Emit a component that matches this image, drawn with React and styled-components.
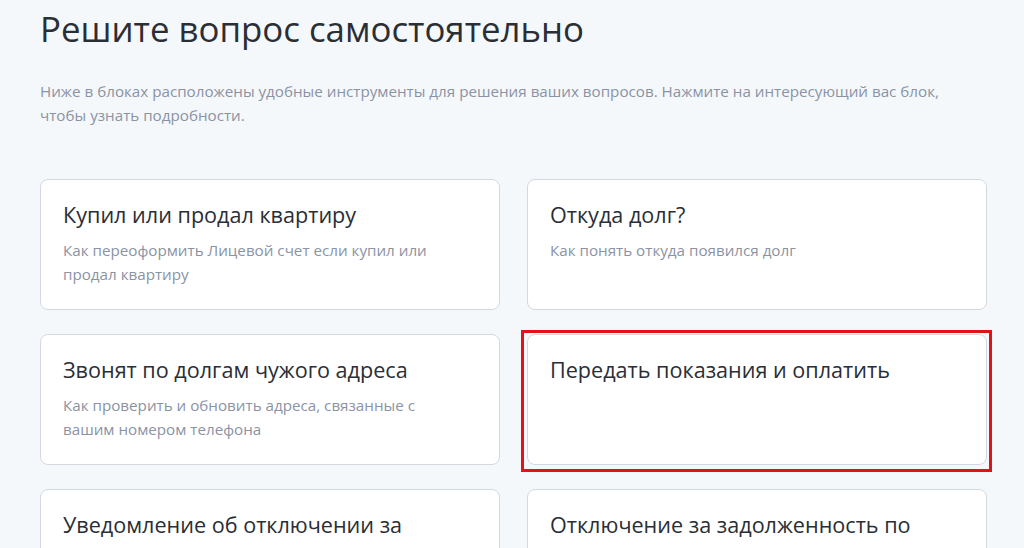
import React from 'react';
import styled, { createGlobalStyle } from 'styled-components';

const GlobalStyle = createGlobalStyle`
  html, body {
    margin: 0;
    padding: 0;
    background: #f5f8fb;
    font-family: "Open Sans", "Noto Sans", sans-serif;
  }
`;

const Page = styled.main`
  padding: 0 37px 0 40px;
  height: 548px;
  overflow: hidden;
`;

const Heading = styled.h1`
  margin: 0;
  padding-top: 6px;
  font-size: 34.8px;
  font-weight: 400;
  line-height: 46px;
  color: #2a2e35;
`;

const Lead = styled.p`
  margin: 27px 0 0;
  max-width: 930px;
  font-size: 15.2px;
  line-height: 24px;
  color: #8a93a4;
`;

const Grid = styled.div`
  display: grid;
  grid-template-columns: 1fr 1fr;
  column-gap: 27px;
  row-gap: 24px;
  margin-top: 52px;
`;

const Card = styled.div`
  position: relative;
  box-sizing: border-box;
  height: 131px;
  padding: 21px 22px;
  background: #fff;
  border: 1px solid #d4d9e1;
  border-radius: 8px;

  ${p => p.$highlight && `
    &::after {
      content: '';
      position: absolute;
      top: -5px;
      left: -7px;
      right: -6px;
      bottom: -8px;
      border: 3px solid #e0131c;
      pointer-events: none;
    }
  `}
`;

const CardTitle = styled.h3`
  margin: 0;
  font-size: 21.6px;
  font-weight: 400;
  line-height: 28px;
  color: #2a2e35;
`;

const CardText = styled.p`
  margin: 9px 0 0;
  font-size: 15.2px;
  line-height: 24px;
  color: #8a93a4;
  max-width: 400px;
`;

const cards = [
  {
    title: 'Купил или продал квартиру',
    text: 'Как переоформить Лицевой счет если купил или продал квартиру',
  },
  { title: 'Откуда долг?', text: 'Как понять откуда появился долг' },
  {
    title: 'Звонят по долгам чужого адреса',
    text: 'Как проверить и обновить адреса, связанные с вашим номером телефона',
  },
  { title: 'Передать показания и оплатить', highlight: true },
  { title: 'Уведомление об отключении за' },
  { title: 'Отключение за задолженность по' },
];

const App = () => (
  <>
    <GlobalStyle />
    <Page>
      <Heading>Решите вопрос самостоятельно</Heading>
      <Lead>
        Ниже в блоках расположены удобные инструменты для решения ваших вопросов. Нажмите на
        интересующий вас блок, чтобы узнать подробности.
      </Lead>
      <Grid>
        {cards.map(c => (
          <Card key={c.title} $highlight={c.highlight}>
            <CardTitle>{c.title}</CardTitle>
            {c.text && <CardText>{c.text}</CardText>}
          </Card>
        ))}
      </Grid>
    </Page>
  </>
);

export default App;
